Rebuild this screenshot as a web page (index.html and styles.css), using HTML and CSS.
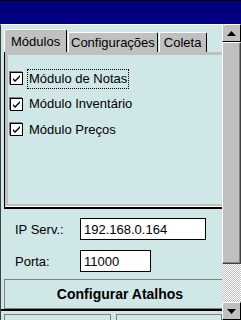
FILE: index.html
```html
<!DOCTYPE html>
<html lang="pt">
<head>
    <meta charset="UTF-8">
    <title>Configurações</title>
    <link rel="stylesheet" href="styles.css">
</head>
<body>
    <div class="titlebar"></div>
    <div class="main">
        <div class="content">
            <div class="tabctl">
                <div class="tabs">
                    <div class="tab active">Módulos</div>
                    <div class="tab">Configurações</div>
                    <div class="tab">Coleta</div>
                </div>
                <div class="panel">
                    <div class="panel-inner">
                        <div class="check-row">
                            <span class="box"><svg width="9" height="9" viewBox="0 0 9 9"><path d="M1 4 L3 6 L8 1 L8 3 L3 8 L1 6 Z" fill="#000"/></svg></span>
                            <span class="label focused">Módulo de Notas</span>
                        </div>
                        <div class="check-row">
                            <span class="box"><svg width="9" height="9" viewBox="0 0 9 9"><path d="M1 4 L3 6 L8 1 L8 3 L3 8 L1 6 Z" fill="#000"/></svg></span>
                            <span class="label">Módulo Inventário</span>
                        </div>
                        <div class="check-row">
                            <span class="box"><svg width="9" height="9" viewBox="0 0 9 9"><path d="M1 4 L3 6 L8 1 L8 3 L3 8 L1 6 Z" fill="#000"/></svg></span>
                            <span class="label">Módulo Preços</span>
                        </div>
                    </div>
                </div>
            </div>
            <div class="field">
                <span class="field-label">IP Serv.:</span>
                <span class="textbox wide">192.168.0.164</span>
            </div>
            <div class="field">
                <span class="field-label">Porta:</span>
                <span class="textbox short">11000</span>
            </div>
            <div class="button">Configurar Atalhos</div>
            <div class="bottom-row">
                <div class="stub"></div>
                <div class="stub"></div>
            </div>
        </div>
        <div class="scrollbar">
            <div class="arrow"><svg width="9" height="5" viewBox="0 0 9 5"><path d="M4.5 0 L9 5 L0 5 Z" fill="#000"/></svg></div>
            <div class="thumb"></div>
            <div class="track"></div>
            <div class="arrow down"><svg width="9" height="5" viewBox="0 0 9 5"><path d="M0 0 L9 0 L4.5 5 Z" fill="#000"/></svg></div>
        </div>
    </div>
</body>
</html>
```

FILE: styles.css
```css
body {
    margin: 0;
    width: 241px;
    height: 320px;
    overflow: hidden;
    font-family: 'Liberation Sans', Arial, sans-serif;
    font-size: 13px;
    color: #000;
    background: #cfe7e7;
}
.titlebar {
    height: 23px;
    background: #000080;
    border-top: 1px solid #000;
}
.main {
    display: flex;
    height: 296px;
}
.content {
    width: 221px;
    border-left: 1px solid #404040;
    border-top: 1px solid #fff;
    background: #cfe7e7;
    overflow: hidden;
}
.tabctl {
    margin: 4px 0 0 3px;
}
.tabs {
    display: flex;
    align-items: flex-end;
    height: 23px;
}
.tab {
    height: 19px;
    line-height: 20px;
    padding: 0 2px;
    background: #c0c0c0;
    border: 1px solid #000;
    border-bottom: none;
    border-left-color: #fff;
    border-top-color: #fff;
    border-radius: 2px 2px 0 0;
    box-sizing: content-box;
}
.tab.active {
    height: 22px;
    line-height: 24px;
    padding: 0 6px;
    width: 49px;
}
.tab + .tab {
    margin-left: 1px;
}
.tab:last-child {
    padding: 0 5px 0 4px;
}
.panel {
    height: 155px;
    border-left: 1px solid #000;
    border-bottom: 2px solid #000;
    background: #fff;
}
.panel-inner {
    height: 149px;
    border: 3px solid #c0c0c0;
    border-right: none;
    border-bottom-width: 2px;
    margin-bottom: 1px;
    background: #cfe7e7;
    padding-top: 11px;
    box-sizing: border-box;
    height: 154px;
}
.check-row {
    display: flex;
    align-items: center;
    height: 25.5px;
    padding-left: 2px;
}
.box {
    width: 11px;
    height: 11px;
    background: #fff;
    border: 1px solid #000;
    box-shadow: -1px -1px 0 #808080;
    display: flex;
    align-items: center;
    justify-content: center;
}
.label {
    margin-left: 4px;
    padding: 1px 1px 2px 1px;
    border: 1px dotted transparent;
}
.label.focused {
    border-color: #000;
}
.field {
    display: flex;
    align-items: center;
    margin-top: 9px;
    height: 22px;
}
.field + .field {
    margin-top: 10px;
}
.field-label {
    width: 65px;
    padding-left: 14px;
}
.textbox {
    height: 20px;
    line-height: 22px;
    border: 1px solid #000;
    background: #fff;
    padding-left: 3px;
}
.textbox.wide {
    width: 121px;
}
.textbox.short {
    width: 66px;
}
.button {
    margin: 7px 0 0 3px;
    width: 230px;
    height: 28px;
    line-height: 28px;
    border: 1px solid #808080;
    text-align: center;
    font-weight: bold;
    font-size: 14px;
    padding-right: 12px;
    box-sizing: content-box;
}
.bottom-row {
    border-top: 2px solid #000;
    display: flex;
    gap: 5px;
    padding: 3px 0 0 3px;
}
.stub {
    width: 105px;
    height: 8px;
    border: 1px solid #808080;
}
.scrollbar {
    width: 19px;
    display: flex;
    flex-direction: column;
    background: #c0c0c0;
}
.arrow {
    height: 16px;
    flex: none;
    border: 1px solid;
    border-color: #fff #000 #000 #fff;
    background: #c0c0c0;
    display: flex;
    align-items: center;
    justify-content: center;
}
.thumb {
    height: 220px;
    flex: none;
    border: 1px solid;
    border-color: #fff #404040 #404040 #fff;
    box-shadow: inset -1px -1px 0 #808080;
    background: #c0c0c0;
}
.track {
    flex: 1;
    background-color: #fff;
    background-image: conic-gradient(#c0c0c0 25%, #fff 0 50%, #c0c0c0 0 75%, #fff 0);
    background-size: 2px 2px;
}
```
